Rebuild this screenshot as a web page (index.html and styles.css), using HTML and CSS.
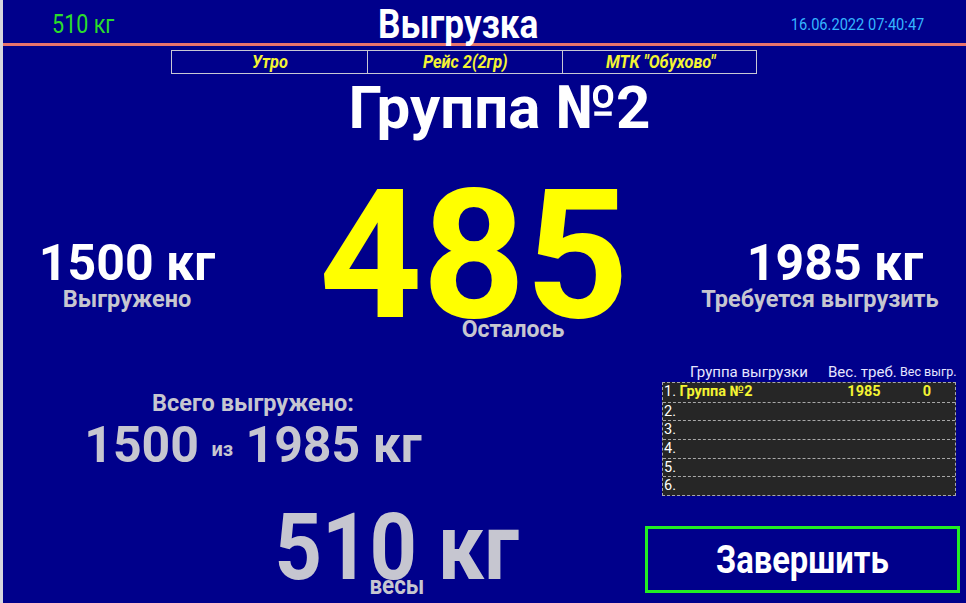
FILE: index.html
```html
<!DOCTYPE html>
<html lang="ru">
<head>
<meta charset="utf-8">
<title>Выгрузка</title>
<link rel="stylesheet" href="styles.css">
</head>
<body>
<div class="screen">
  <header class="topbar">
    <div class="tb-left"><span class="cond">510 кг</span></div>
    <div class="tb-title"><span class="cond">Выгрузка</span></div>
    <div class="tb-right"><span class="cond">16.06.2022 07:40:47</span></div>
  </header>
  <div class="info">
    <div class="info-cell"><span class="cond">Утро</span></div>
    <div class="info-cell"><span class="cond">Рейс 2(2гр)</span></div>
    <div class="info-cell"><span class="cond">МТК "Обухово"</span></div>
  </div>
  <h1 class="group">Группа №2</h1>
  <section class="mid">
    <div class="stat stat-left">
      <div class="stat-val">1500 кг</div>
      <div class="stat-lbl">Выгружено</div>
    </div>
    <div class="remain">
      <div class="remain-val">485</div>
      <div class="remain-lbl">Осталось</div>
    </div>
    <div class="stat stat-right">
      <div class="stat-val">1985 кг</div>
      <div class="stat-lbl">Требуется выгрузить</div>
    </div>
  </section>
  <section class="lower">
    <div class="total">
      <div class="total-lbl">Всего выгружено:</div>
      <div class="total-val">1500 <small>из</small> 1985 кг</div>
    </div>
    <div class="queue">
      <div class="q-head">
        <span class="qh-name">Группа выгрузки</span>
        <span class="qh-req">Вес. треб.</span>
        <span class="qh-done">Вес выгр.</span>
      </div>
      <div class="q-table">
        <div class="q-row active"><span class="q-name"><span class="q-num">1.</span> <b>Группа №2</b></span><span class="q-req">1985</span><span class="q-done">0</span></div>
        <div class="q-row"><span class="q-name"><span class="q-num">2.</span></span><span class="q-req"></span><span class="q-done"></span></div>
        <div class="q-row"><span class="q-name"><span class="q-num">3.</span></span><span class="q-req"></span><span class="q-done"></span></div>
        <div class="q-row"><span class="q-name"><span class="q-num">4.</span></span><span class="q-req"></span><span class="q-done"></span></div>
        <div class="q-row"><span class="q-name"><span class="q-num">5.</span></span><span class="q-req"></span><span class="q-done"></span></div>
        <div class="q-row"><span class="q-name"><span class="q-num">6.</span></span><span class="q-req"></span><span class="q-done"></span></div>
      </div>
    </div>
  </section>
  <section class="bottom">
    <div class="scale">
      <div class="scale-val"><span class="cond">510 кг</span></div>
      <div class="scale-lbl"><span class="cond">весы</span></div>
    </div>
    <button class="finish"><span class="cond">Завершить</span></button>
  </section>
</div>
</body>
</html>
```
FILE: styles.css
```css
* { box-sizing: border-box; }
html, body { margin: 0; padding: 0; }
body {
  width: 966px;
  height: 603px;
  overflow: hidden;
  background: #00008b;
  font-family: Roboto, "Noto Sans", sans-serif;
}
.screen {
  width: 966px;
  height: 603px;
  border-left: 3px solid #d6d6de;
  background: #00008b;
  color: #fff;
}
.cond {
  display: inline-block;
  transform: scaleX(0.86);
  white-space: nowrap;
}

/* top bar */
.topbar {
  display: grid;
  grid-template-columns: 297px 316px 1fr;
  align-items: center;
  height: 46px;
  border-bottom: 3px solid #e8736c;
}
.tb-left {
  padding-left: 44px;
  color: #2bdc2b;
  font-size: 25px;
  font-weight: 400;
}
.tb-title {
  text-align: center;
  font-size: 40px;
  font-weight: 700;
  line-height: 46px;
  padding-top: 2px;
  color: #fff;
}
.tb-title .cond { transform: scaleX(0.88); }
.tb-right {
  text-align: right;
  padding-right: 31px;
  color: #35b6ff;
  font-size: 17px;
}

/* info strip */
.info {
  display: grid;
  grid-template-columns: 195px 195px 196px;
  width: 586px;
  height: 24px;
  margin: 4px 0 0 168px;
  border: 1px solid #c8c8d4;
}
.info-cell {
  border-left: 1px solid #c8c8d4;
  text-align: center;
  color: #f4f433;
  font-size: 19px;
  font-weight: 700;
  font-style: italic;
  line-height: 22px;
}
.info-cell:first-child { border-left: 0; }

/* group title */
.group {
  margin: 2px 0 0;
  padding-left: 30px;
  text-align: center;
  font-size: 60px;
  font-weight: 700;
  line-height: 64px;
  color: #fff;
}

/* middle */
.mid {
  display: grid;
  grid-template-columns: 248px 423px 1fr;
  align-items: start;
}
.stat { text-align: center; margin-top: 95px; }
.stat-val {
  font-size: 50px;
  font-weight: 700;
  line-height: 56px;
  color: #fff;
}
.stat-lbl {
  margin-top: -5px;
  font-size: 23.5px;
  font-weight: 700;
  line-height: 27px;
  color: #c6c6d0;
}
.stat-right .stat-val { padding-left: 30px; }
.remain { text-align: center; margin-top: 46px; }
.remain-val {
  padding-left: 23px;
  font-size: 180px;
  font-weight: 700;
  line-height: 140px;
  color: #ffff00;
}
.remain-lbl {
  margin-top: -9px;
  padding-left: 101px;
  font-size: 23px;
  font-weight: 700;
  line-height: 26px;
  color: #c6c6d0;
}

/* lower */
.lower {
  display: grid;
  grid-template-columns: 500px 294px;
  column-gap: 159px;
  align-items: start;
}
.total { text-align: center; margin-top: 47px; color: #c6c6d0; font-weight: 700; }
.total-lbl { font-size: 23.5px; line-height: 27px; }
.total-val { font-size: 50px; line-height: 56px; margin-top: 0; }
.total-val small { font-size: 20px; vertical-align: 6px; }
.queue { margin-top: 20px; }
.q-head {
  display: grid;
  grid-template-columns: 166px 72px 1fr;
  height: 19px;
  font-size: 15px;
  line-height: 18px;
  color: #e6e6ff;
  white-space: nowrap;
}
.qh-name { padding-left: 28px; }
.qh-done { font-size: 12.5px; }
.q-table {
  width: 294px;
  background: #262626;
  border: 1px dashed #a8a8a8;
}
.q-row {
  display: grid;
  grid-template-columns: 166px 70px 1fr;
  height: 18.7px;
  border-top: 1px dashed #a8a8a8;
  font-size: 14.5px;
  line-height: 17px;
  color: #fff;
}
.q-row:first-child { border-top: 0; }
.q-name { padding-left: 1px; }
.q-name b, .q-req, .q-done { color: #f4f433; font-weight: 700; }
.q-req, .q-done { text-align: center; }

/* bottom */
.bottom {
  display: grid;
  grid-template-columns: 642px 315px;
  align-items: start;
}
.scale { text-align: center; padding-left: 146px; margin-top: 11px; color: #c6c6d0; font-weight: 700; }
.scale-val { font-size: 92px; line-height: 82px; }
.scale-val .cond { transform: scaleX(0.9); }
.scale-lbl { font-size: 26px; line-height: 26px; margin-top: -17px; }
.finish {
  margin-top: 30px;
  width: 315px;
  height: 67px;
  background: #00008b;
  border: 3px solid #22ee22;
  color: #fff;
  font-family: Roboto, "Noto Sans", sans-serif;
  font-size: 38px;
  font-weight: 700;
  padding: 0;
  cursor: pointer;
}
.finish .cond { transform: scaleX(0.86); }
```
